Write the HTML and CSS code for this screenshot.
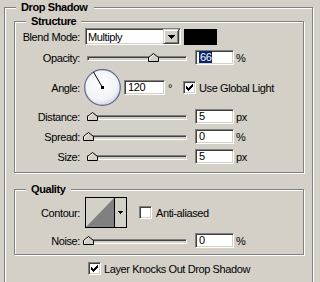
FILE: index.html
```html
<!DOCTYPE html>
<html lang="en">
<head>
  <meta charset="UTF-8" />
  <title>Drop Shadow</title>
  <link rel="stylesheet" href="styles.css">
</head>
<body>
  <div class="panel">
    <fieldset class="group outer">
      <legend>Drop Shadow</legend>

      <fieldset class="group inner structure">
        <legend>Structure</legend>

        <div class="row row-blend">
          <span class="lbl">Blend Mode:</span>
          <div class="select sunken">
            <span class="select-text">Multiply</span>
            <span class="drop-btn raised">
              <svg width="7" height="4" viewBox="0 0 7 4"><path d="M0 0h7v1h-7zM1 1h5v1h-5zM2 2h3v1h-3zM3 3h1v1h-1z" fill="#000"/></svg>
            </span>
          </div>
          <span class="swatch"></span>
        </div>

        <div class="row row-input row-opacity">
          <span class="lbl">Opacity:</span>
          <div class="slider">
            <div class="track"></div>
            <svg class="thumb" style="left:65px" width="11" height="9" viewBox="0 0 11 9"><path d="M0.5 8.5V4.5L5.5 0.5L10.5 4.5V8.5Z" fill="#d4d0c8" stroke="#000"/><path d="M1.5 7.5V5L5.5 1.8" fill="none" stroke="#fff"/></svg>
          </div>
          <div class="field sunken"><span class="sel">66</span></div>
          <span class="unit">%</span>
        </div>

        <div class="row row-angle">
          <span class="lbl">Angle:</span>
          <svg class="dial" width="37" height="37" viewBox="0 0 37 37">
            <defs>
              <radialGradient id="dialfill" cx="45%" cy="40%" r="62%">
                <stop offset="0" stop-color="#ffffff"/>
                <stop offset="0.75" stop-color="#f1f2f6"/>
                <stop offset="1" stop-color="#c9cfdc"/>
              </radialGradient>
            </defs>
            <circle cx="18.5" cy="18.5" r="17.8" fill="url(#dialfill)" stroke="#5b6a8c" stroke-width="1.2"/>
            <line x1="18.5" y1="18.5" x2="9.5" y2="3" stroke="#000" stroke-width="1"/>
            <rect x="17" y="17" width="3" height="3" fill="#000"/>
          </svg>
          <div class="field sunken field-angle">120</div>
          <span class="deg">°</span>
          <span class="check sunken">
            <svg width="7" height="7" viewBox="0 0 7 7"><path d="M6 0h1v1h-1zM5 1h2v1h-2zM0 2h1v1h-1zM4 2h3v1h-3zM0 3h2v1h-2zM3 3h3v1h-3zM0 4h5v1h-5zM1 5h3v1h-3zM2 6h1v1h-1z" fill="#000"/></svg>
          </span>
          <span class="check-text">Use Global Light</span>
        </div>

        <div class="row row-input row-distance">
          <span class="lbl">Distance:</span>
          <div class="slider">
            <div class="track"></div>
            <svg class="thumb" style="left:4px" width="11" height="9" viewBox="0 0 11 9"><path d="M0.5 8.5V4.5L5.5 0.5L10.5 4.5V8.5Z" fill="#d4d0c8" stroke="#000"/><path d="M1.5 7.5V5L5.5 1.8" fill="none" stroke="#fff"/></svg>
          </div>
          <div class="field sunken">5</div>
          <span class="unit">px</span>
        </div>

        <div class="row row-input row-spaced">
          <span class="lbl">Spread:</span>
          <div class="slider">
            <div class="track"></div>
            <svg class="thumb" style="left:0px" width="11" height="9" viewBox="0 0 11 9"><path d="M0.5 8.5V4.5L5.5 0.5L10.5 4.5V8.5Z" fill="#d4d0c8" stroke="#000"/><path d="M1.5 7.5V5L5.5 1.8" fill="none" stroke="#fff"/></svg>
          </div>
          <div class="field sunken">0</div>
          <span class="unit">%</span>
        </div>

        <div class="row row-input row-spaced">
          <span class="lbl">Size:</span>
          <div class="slider">
            <div class="track"></div>
            <svg class="thumb" style="left:4px" width="11" height="9" viewBox="0 0 11 9"><path d="M0.5 8.5V4.5L5.5 0.5L10.5 4.5V8.5Z" fill="#d4d0c8" stroke="#000"/><path d="M1.5 7.5V5L5.5 1.8" fill="none" stroke="#fff"/></svg>
          </div>
          <div class="field sunken">5</div>
          <span class="unit">px</span>
        </div>
      </fieldset>

      <fieldset class="group inner quality">
        <legend>Quality</legend>

        <div class="row row-contour">
          <span class="lbl">Contour:</span>
          <div class="contour">
            <svg class="contour-preview" width="28" height="29" viewBox="0 0 28 29"><path d="M0 29L28 0V29Z" fill="#808080"/></svg>
            <span class="contour-btn">
              <svg width="5" height="3" viewBox="0 0 5 3"><path d="M0 0h5v1h-5zM1 1h3v1h-3zM2 2h1v1h-1z" fill="#000"/></svg>
            </span>
          </div>
          <span class="check sunken check-aa"></span>
          <span class="check-text">Anti-aliased</span>
        </div>

        <div class="row row-input row-spaced">
          <span class="lbl">Noise:</span>
          <div class="slider">
            <div class="track"></div>
            <svg class="thumb" style="left:0px" width="11" height="9" viewBox="0 0 11 9"><path d="M0.5 8.5V4.5L5.5 0.5L10.5 4.5V8.5Z" fill="#d4d0c8" stroke="#000"/><path d="M1.5 7.5V5L5.5 1.8" fill="none" stroke="#fff"/></svg>
          </div>
          <div class="field sunken">0</div>
          <span class="unit">%</span>
        </div>
      </fieldset>

      <div class="row row-knock">
        <span class="check sunken">
          <svg width="7" height="7" viewBox="0 0 7 7"><path d="M6 0h1v1h-1zM5 1h2v1h-2zM0 2h1v1h-1zM4 2h3v1h-3zM0 3h2v1h-2zM3 3h3v1h-3zM0 4h5v1h-5zM1 5h3v1h-3zM2 6h1v1h-1z" fill="#000"/></svg>
        </span>
        <span class="check-text">Layer Knocks Out Drop Shadow</span>
      </div>
    </fieldset>
  </div>
</body>
</html>
```

FILE: styles.css
```css
/* === Base === */
* {
  box-sizing: border-box;
}

html,
body {
  margin: 0;
  height: 100%;
  overflow: hidden;
}

body {
  background: #d4d0c8;
  color: #000;
  font-family: "Liberation Sans", Arial, sans-serif;
  font-size: 11px;
  letter-spacing: -0.4px;
}

/* the dialog is cut off by the window, so the outer box runs past the bottom */
.panel {
  height: 282px;
  overflow: hidden;
  padding: 1px 0 0 4px;
}

/* === Etched group boxes === */
.group {
  margin: 0;
  padding: 0;
  min-width: 0;
  border: 1px solid #808080;
  box-shadow: inset 1px 1px 0 #fff, 1px 1px 0 #fff;
}

.group > legend {
  height: 13px;
  line-height: 13px;
  padding: 0 5px;
  margin-left: 11px;
  font-weight: bold;
  background: #d4d0c8;
}

.outer {
  width: 309px;
  height: 300px;
  padding: 1px 0 0 9px;
}

.outer > legend {
  margin-left: 2px;
  padding: 0 6px 0 5px;
}

.inner {
  width: 290px;
}

.structure {
  padding-bottom: 8px;
}

.quality {
  margin-top: 10px;
  padding-bottom: 6px;
}

/* === Rows === */
.row {
  display: flex;
  align-items: center;
}

.lbl {
  flex: none;
  width: 65px;
  margin-right: 3px;
  text-align: right;
}

.row-blend {
  height: 17px;
}

.row-input {
  height: 15px;
}

.row-opacity {
  margin-top: 5px;
}

.row-angle {
  height: 37px;
  margin-top: 4px;
}

.row-distance {
  margin-top: 3px;
}

.row-spaced {
  margin-top: 5px;
}

.row-contour {
  height: 31px;
  margin-top: 1px;
}

.row-knock {
  height: 13px;
  margin: 7px 0 0 74px;
}

/* === Controls === */
.sunken {
  border: 1px solid;
  border-color: #808080 #fff #fff #808080;
  box-shadow: inset 1px 1px 0 #404040, inset -1px -1px 0 #d4d0c8;
  background: #fff;
}

.raised {
  border: 1px solid;
  border-color: #d4d0c8 #404040 #404040 #d4d0c8;
  box-shadow: inset 1px 1px 0 #fff, inset -1px -1px 0 #808080;
  background: #d4d0c8;
}

.select {
  flex: none;
  display: flex;
  align-items: center;
  width: 96px;
  height: 17px;
  margin-left: 2px;
  padding: 1px;
}

.select-text {
  flex: 1;
  padding-left: 1px;
}

.drop-btn {
  display: flex;
  align-items: center;
  justify-content: center;
  width: 16px;
  height: 15px;
}

.swatch {
  flex: none;
  width: 33px;
  height: 16px;
  margin-left: 3px;
  background: #000;
}

.slider {
  position: relative;
  flex: none;
  width: 104px;
  height: 15px;
}

.track {
  width: 100px;
  height: 5px;
  margin: 6px 0 0 4px;
  border: 1px solid;
  border-color: #808080 #fff #fff #808080;
  box-shadow: inset 1px 1px 0 #404040;
  background: #d4d0c8;
}

.thumb {
  position: absolute;
  top: 3px;
}

.field {
  flex: none;
  width: 39px;
  height: 15px;
  margin-left: 8px;
  padding-left: 3px;
  line-height: 13px;
}

.sel {
  display: inline-block;
  padding: 0 1px;
  line-height: 12px;
  background: #0a246a;
  color: #fff;
}

.unit {
  margin-left: 2px;
}

.dial {
  flex: none;
  margin-left: 1px;
}

.field-angle {
  width: 41px;
  margin-left: 3px;
}

.deg {
  flex: none;
  width: 15px;
  margin-left: 3px;
}

.check {
  flex: none;
  display: flex;
  align-items: center;
  justify-content: center;
  width: 13px;
  height: 13px;
}

.check-text {
  margin-left: 3px;
  white-space: nowrap;
}

.contour {
  flex: none;
  display: flex;
  width: 42px;
  height: 31px;
  margin-left: 2px;
  border: 1px solid #000;
  background: #d4d0c8;
}

.contour-btn {
  display: flex;
  align-items: center;
  justify-content: center;
  width: 12px;
  border-left: 1px solid #000;
}

.check-aa {
  margin-left: 12px;
}

.check-aa + .check-text {
  margin-left: 4px;
}
```
